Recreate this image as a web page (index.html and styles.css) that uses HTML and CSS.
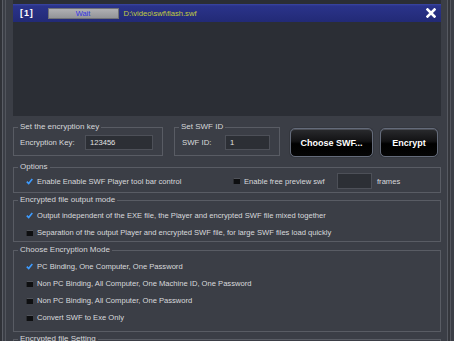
FILE: index.html
```html
<!DOCTYPE html>
<html>
<head>
<meta charset="utf-8">
<link rel="stylesheet" href="styles.css">
</head>
<body>
<div class="app">
  <div class="list">
    <div class="item">
      <span class="idx">[1]</span>
      <span class="prog">Wait</span>
      <span class="path">D:\video\swf\flash.swf</span>
      <svg class="close" width="10" height="10" viewBox="0 0 10 10"><path d="M1.5 1.5 L8.5 8.5 M8.5 1.5 L1.5 8.5" stroke="#fff" stroke-width="2.6" stroke-linecap="square"/></svg>
    </div>
  </div>

  <div class="toprow">
    <fieldset class="grp keygrp">
      <legend>Set the encryption key</legend>
      <div class="frow"><span class="lbl klbl">Encryption Key:</span><span class="inp kinp">123456</span></div>
    </fieldset>
    <fieldset class="grp idgrp">
      <legend>Set SWF ID</legend>
      <div class="frow"><span class="lbl idlbl">SWF ID:</span><span class="inp idinp">1</span></div>
    </fieldset>
    <div class="btn choose">Choose SWF...</div>
    <div class="btn enc">Encrypt</div>
  </div>

  <fieldset class="grp opts">
    <legend>Options</legend>
    <div class="orow">
      <div class="chk first"><svg class="tick" width="7" height="7" viewBox="0 0 7 7"><path d="M0.8 3.6 L2.7 5.6 L6.3 0.9" fill="none" stroke="#3d9bff" stroke-width="1.6"/></svg><span>Enable Enable SWF Player tool bar control</span></div>
      <div class="chk second"><span class="box"></span><span>Enable free preview swf</span></div>
      <span class="inp finp"></span>
      <span class="frames">frames</span>
    </div>
  </fieldset>

  <fieldset class="grp outmode">
    <legend>Encrypted file output mode</legend>
    <div class="row chk"><svg class="tick" width="7" height="7" viewBox="0 0 7 7"><path d="M0.8 3.6 L2.7 5.6 L6.3 0.9" fill="none" stroke="#3d9bff" stroke-width="1.6"/></svg><span>Output independent of the EXE file, the Player and encrypted SWF file mixed together</span></div>
    <div class="row chk"><span class="box"></span><span>Separation of the output Player and encrypted SWF file, for large SWF files load quickly</span></div>
  </fieldset>

  <fieldset class="grp encmode">
    <legend>Choose Encryption Mode</legend>
    <div class="row chk"><svg class="tick" width="7" height="7" viewBox="0 0 7 7"><path d="M0.8 3.6 L2.7 5.6 L6.3 0.9" fill="none" stroke="#3d9bff" stroke-width="1.6"/></svg><span>PC Binding, One Computer, One Password</span></div>
    <div class="row chk"><span class="box"></span><span>Non PC Binding, All Computer, One Machine ID, One Password</span></div>
    <div class="row chk"><span class="box"></span><span>Non PC Binding, All Computer, One Password</span></div>
    <div class="row chk"><span class="box"></span><span>Convert SWF to Exe Only</span></div>
  </fieldset>

  <fieldset class="grp last">
    <legend>Encrypted file Setting</legend>
  </fieldset>
</div>
</body>
</html>
```

FILE: styles.css
```css
* { box-sizing: border-box; }
html, body { margin: 0; height: 100%; }
body {
  background-color: #3b3e46;
  background-image:
    linear-gradient(to right, #303238 0 2px, #5a5d65 2px 3px, #3b3e46 3px 5px, #52555d 5px 6px, transparent 6px),
    linear-gradient(to left, #3b3e46 0 3px, #53565e 3px 4px, #34363c 4px 6px, #565961 6px 7px, transparent 7px);
  background-repeat: no-repeat;
  font-family: "Liberation Sans", Arial, sans-serif;
  font-size: 7.6px;
  color: #d9dadd;
  overflow: hidden;
}
.app {
  width: 428px;
  margin-left: 13px;
  display: flex;
  flex-direction: column;
}
.list {
  height: 116px;
  background: #2b2e35;
  padding-top: 4px;
}
.item {
  height: 18px;
  background: linear-gradient(#3a46a2 0, #2a338a 2px, #262e7f 60%, #222a76 100%);
  display: flex;
  align-items: center;
  padding-left: 7px;
}
.idx {
  width: 27.5px;
  font-weight: bold;
  font-size: 9px;
  letter-spacing: 0.9px;
  color: #fff;
}
.prog {
  width: 71px;
  height: 11px;
  background: linear-gradient(#b0b0b3, #939498);
  border: 1px solid #707176;
  color: #3434e6;
  font-size: 7.5px;
  line-height: 9px;
  text-align: center;
}
.path {
  margin-left: 5px;
  color: #c3cd3f;
}
.close {
  margin-left: auto;
  margin-right: 5px;
}

.grp {
  border: 1px solid #595c64;
  margin: 0;
  padding: 0;
  min-width: 0;
}
.grp legend {
  margin-left: 4px;
  padding: 0 2px;
  line-height: 10px;
  height: 10px;
  font-size: 8px;
  color: #d6d7da;
}

.toprow {
  display: flex;
  align-items: flex-start;
  margin-top: 6px;
}
.frow {
  display: flex;
  align-items: center;
  margin-top: 3px;
  padding-bottom: 5px;
}
.keygrp { width: 150px; }
.keygrp .frow { padding-left: 6px; }
.klbl { width: 65px; font-size: 7.8px; }
.inp {
  height: 15px;
  background: #2c2f35;
  border: 1px solid #4d5058;
  padding-left: 4px;
  line-height: 13px;
  color: #e2e2e2;
}
.kinp { width: 68px; }
.idgrp { width: 106px; margin-left: 11px; }
.idgrp .frow { padding-left: 7px; }
.idlbl { width: 43px; font-size: 7.8px; }
.idinp { width: 45px; }

.btn {
  height: 29px;
  margin-top: 6px;
  border: 1px solid #646b7a;
  border-radius: 5px;
  background: linear-gradient(#2a2b2e 0, #121214 45%, #000 55%, #050505 100%);
  box-shadow: inset 0 1px 0 #4a4d55, 0 0 0 1px #34373e;
  color: #fff;
  font-weight: bold;
  font-size: 9px;
  display: flex;
  align-items: center;
  justify-content: center;
}
.choose { width: 83px; margin-left: 10px; }
.enc { width: 58px; margin-left: 7px; }

.opts { margin-top: 5px; }
.orow {
  display: flex;
  align-items: center;
  height: 16px;
  margin-top: 1px;
  margin-bottom: 3px;
  padding-left: 12px;
}
.chk {
  display: flex;
  align-items: center;
}
.chk .tick, .chk .box { flex: none; margin-right: 4px; }
.box {
  width: 7px;
  height: 6px;
  background: #0e0f11;
  border-top: 1px solid #4f5259;
  border-left: 1px solid #2a2c30;
}
.first { width: 207px; }
.second { width: 104px; }
.finp { width: 35px; height: 16px; }
.frames { margin-left: 5px; }

.outmode { margin-top: 2px; padding-top: 2px; }
.row {
  height: 17px;
  padding-left: 12px;
}
.encmode { margin-top: 3px; padding-top: 3px; padding-bottom: 5px; }
.last { margin-top: 2px; height: 30px; }
```
